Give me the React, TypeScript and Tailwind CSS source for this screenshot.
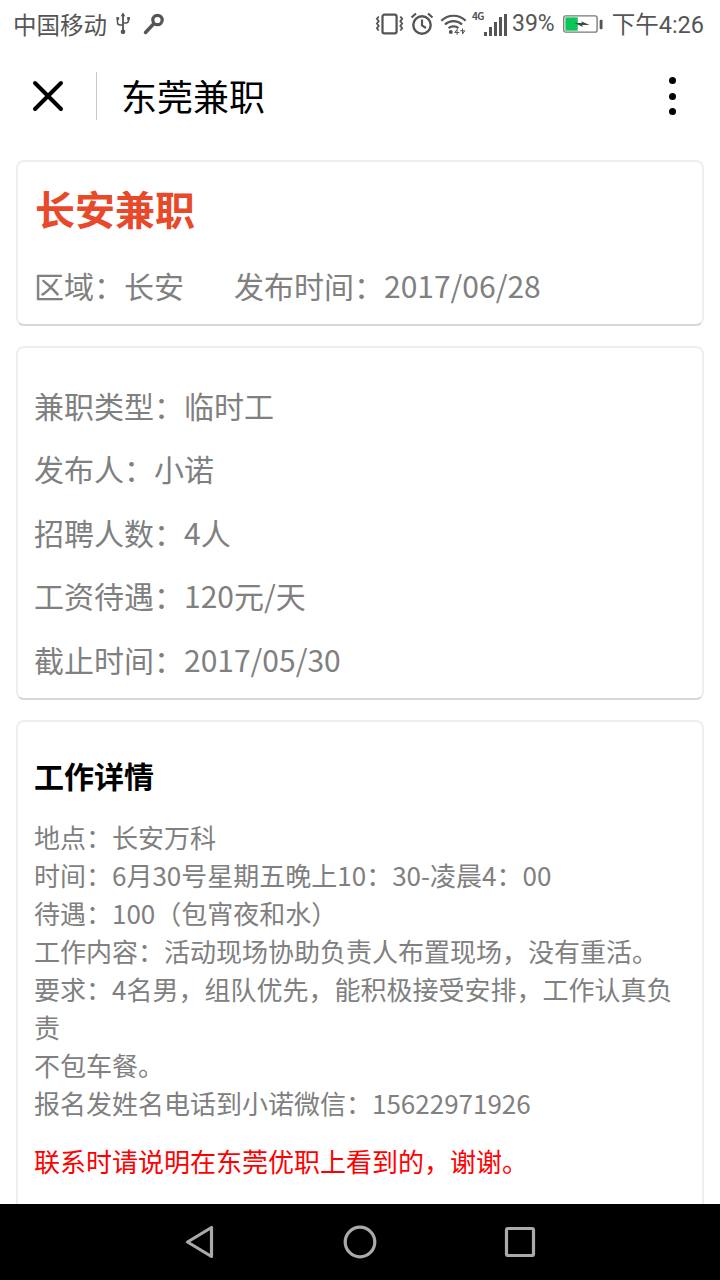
import React from "react";

function Usb() {
  return (
    <svg width="18" height="24" viewBox="0 0 18 26" className="text-[#555]" fill="none" stroke="currentColor">
      <path d="M9 2v20" strokeWidth="2" />
      <path d="M9 0.5l2.5 4h-5z" fill="currentColor" stroke="none" />
      <circle cx="9" cy="21.5" r="2.5" fill="currentColor" stroke="none" />
      <path d="M3 8v3c0 2 1 3 3 3h3M15 8v1c0 2-1 3-3 3H9" strokeWidth="1.6" />
      <rect x="1.8" y="5.5" width="3" height="3" fill="currentColor" stroke="none" />
      <rect x="13.5" y="5.5" width="3" height="3" fill="currentColor" stroke="none" />
    </svg>
  );
}

function Key() {
  return (
    <svg width="24" height="24" viewBox="0 0 24 24" fill="none" stroke="#555">
      <circle cx="15.5" cy="8" r="4.7" strokeWidth="3.2" />
      <path d="M11.5 12L3.5 20.5" strokeWidth="3.4" strokeLinecap="round" />
    </svg>
  );
}

function StatusRight() {
  return (
    <div className="flex items-center">
      <svg width="30" height="24" viewBox="0 0 32 24" fill="none" stroke="#555">
        <rect x="8" y="2" width="15" height="20" rx="2" strokeWidth="2.4" />
        <path d="M4 4l-2 2.500 2 2.500-2 2.500 2 2.500-2 2.500 2 2.500M27 4l2 2.500-2 2.500 2 2.500-2 2.500 2 2.500-2 2.500" strokeWidth="1.9" />
      </svg>
      <svg width="26" height="26" viewBox="0 0 26 26" fill="none" stroke="#555" className="ml-[4px]">
        <circle cx="13" cy="14" r="8.700" strokeWidth="2.400" />
        <path d="M13 8.500V14.500L17 17M2.500 6.500L7 2.500M23.500 6.500L19 2.500" strokeWidth="2.200" />
      </svg>
      <svg width="27" height="24" viewBox="0 0 30 24" fill="none" stroke="#555" className="ml-[5px]">
        <path d="M1.500 8.500C9 1 21 1 28.500 8.500" strokeWidth="2.400" />
        <path d="M5.500 12.500C11 7.500 19 7.500 24.500 12.500" strokeWidth="2.400" />
        <path d="M9.500 16.500C12.500 14 17.500 14 20.500 16.500" strokeWidth="2.400" />
        <circle cx="12" cy="21" r="2.200" fill="#555" stroke="none" />
        <path d="M19 24v-6l-2.500 3.500h5M25 17v6l2.500-3.500h-5" strokeWidth="1.100" />
      </svg>
      <div className="relative ml-[5px] flex h-[24px] w-[35px] items-end justify-end gap-[2px]">
        <span className="absolute left-[0px] top-[-3px] text-[10px] leading-[14px] font-bold tracking-[-0.5px] text-[#555]">4G</span>
        <span className="h-[4px] w-[3px] bg-[#555]" />
        <span className="h-[9px] w-[3px] bg-[#555]" />
        <span className="h-[14px] w-[3px] bg-[#555]" />
        <span className="h-[19px] w-[3px] bg-[#555]" />
        <span className="h-[22px] w-[3px] bg-[#555]" />
      </div>
      <span className="ml-[5px] font-['Roboto','Noto_Sans_CJK_SC',sans-serif] text-[23px] leading-[30px] text-[#555]">39%</span>
      <svg width="40" height="21" viewBox="0 0 42 22" fill="none" className="ml-[8px]">
        <rect x="0.800" y="2" width="35" height="17" rx="2" stroke="#777" strokeWidth="1.400" />
        <rect x="2.500" y="3.500" width="13" height="14" fill="#0bc658" />
        <path d="M12 9.500H20L19 7.500L28 11.500H20L21 13.500Z" fill="#444" />
        <rect x="38.500" y="6" width="3" height="10" rx="1" fill="#555" />
      </svg>
      <span className="ml-[9px] mt-[2px] font-['Roboto','Noto_Sans_CJK_SC',sans-serif] text-[23.500px] leading-[30px] text-[#555]">下午4:26</span>
    </div>
  );
}

function Card({ className, children }: { className: string; children: React.ReactNode }) {
  return (
    <div className={`rounded-[8px] border-2 border-[#eeeeee] border-b-[#d6d6d6] bg-white ${className}`}>
      {children}
    </div>
  );
}

const rows = ["兼职类型：临时工", "发布人：小诺", "招聘人数：4人", "工资待遇：120元/天", "截止时间：2017/05/30"];
const details = [
  "地点：长安万科",
  "时间：6月30号星期五晚上10：30-凌晨4：00",
  "待遇：100（包宵夜和水）",
  "工作内容：活动现场协助负责人布置现场，没有重活。",
  "要求：4名男，组队优先，能积极接受安排，工作认真负责",
  "不包车餐。",
  "报名发姓名电话到小诺微信：15622971926",
];

export default function App() {
  return (
    <div className="flex h-[1280px] w-[720px] flex-col overflow-hidden bg-white font-['Noto_Sans_CJK_SC','Noto_Sans',sans-serif]">
      <div className="flex h-[50px] shrink-0 items-center justify-between pb-[2px] pl-[13px] pr-[16px]">
        <div className="flex items-center">
          <span className="text-[23.500px] leading-[30px] text-[#555]">中国移动</span>
          <span className="ml-[7px]"><Usb /></span>
          <span className="ml-[10px]"><Key /></span>
        </div>
        <StatusRight />
      </div>
      <div className="flex h-[92px] shrink-0 items-center">
        <div className="flex w-[96px] justify-center">
          <svg width="34" height="34" viewBox="0 0 34 34" fill="none" stroke="#000" strokeWidth="4" strokeLinecap="round">
            <path d="M4 4L30 30M30 4L4 30" />
          </svg>
        </div>
        <div className="h-[48px] w-px bg-[#c8c8c8]" />
        <span className="ml-[24px] mb-[2px] flex-1 text-[36px] leading-[48px] text-black">东莞兼职</span>
        <div className="mr-[44px] flex flex-col gap-[8.500px]">
          <span className="h-[7px] w-[7px] rounded-full bg-black" />
          <span className="h-[7px] w-[7px] rounded-full bg-black" />
          <span className="h-[7px] w-[7px] rounded-full bg-black" />
        </div>
      </div>
      <div className="flex min-h-0 flex-1 flex-col gap-[20px] overflow-hidden px-[16px] pt-[18px]">
        <Card className="h-[166px] shrink-0 pl-[17px] pr-[16px] pt-[17px]">
          <div className="text-[40px] leading-[58px] font-bold text-[#e8492a]">长安兼职</div>
          <div className="mt-[26px] flex text-[30px] leading-[44px] text-[#808080]">
            <span className="-ml-[1px]">区域：长安</span>
            <span className="ml-[50px]">发布时间：2017/06/28</span>
          </div>
        </Card>
        <Card className="h-[354px] shrink-0 px-[16px] pt-[35px]">
          <div className="flex flex-col gap-[19.400px] text-[30px] leading-[44px] text-[#808080]">
            {rows.map((r) => (
              <div key={r}>{r}</div>
            ))}
          </div>
        </Card>
        <Card className="min-h-[520px] shrink-0 px-[16px] pt-[31px]">
          <div className="text-[30px] leading-[44px] font-bold text-black">工作详情</div>
          <div className="mt-[21px] text-[26px] leading-[38px] text-[#808080]">
            {details.map((d) => (
              <div key={d}>{d}</div>
            ))}
          </div>
          <div className="mt-[20px] text-[26px] leading-[38px] text-[#ff0000]">联系时请说明在东莞优职上看到的，谢谢。</div>
        </Card>
      </div>
      <div className="flex h-[76px] shrink-0 items-center justify-center gap-[90px] bg-black">
        <svg width="70" height="40" viewBox="0 0 70 40" fill="none" stroke="#aaa" strokeWidth="3.200" strokeLinejoin="round">
          <path d="M46.500 5.500V34.500L22.500 20Z" />
        </svg>
        <svg width="70" height="40" viewBox="0 0 70 40" fill="none" stroke="#aaa" strokeWidth="3.200">
          <circle cx="35" cy="20" r="14.800" />
        </svg>
        <svg width="70" height="40" viewBox="0 0 70 40" fill="none" stroke="#aaa" strokeWidth="3.200" strokeLinejoin="round">
          <rect x="21.500" y="6.500" width="27" height="27" rx="1.500" />
        </svg>
      </div>
    </div>
  );
}
